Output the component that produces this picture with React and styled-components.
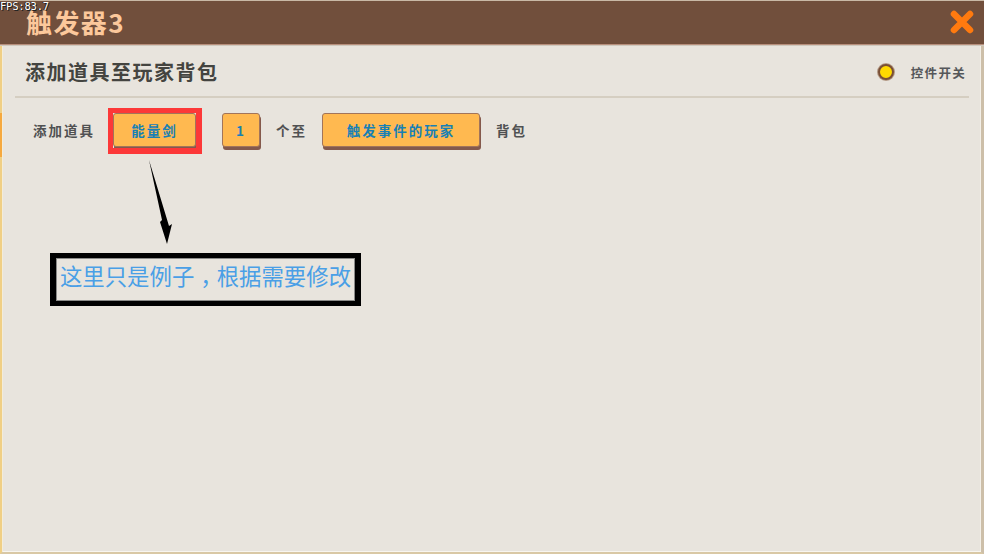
import React from "react";
import styled, { createGlobalStyle } from "styled-components";

const Global = createGlobalStyle`
  html, body { margin: 0; padding: 0; background: #e8e4dd; }
  body { font-family: "Noto Sans CJK SC", "Noto Sans", sans-serif; }
`;
const Screen = styled.div`
  position: relative; width: 984px; height: 554px; overflow: hidden;
  display: flex; flex-direction: column; background: #e8e4dd;
`;
const Header = styled.header`
  height: 45px; flex: none; box-sizing: border-box;
  background: #714f3c; border-top: 1px solid #c9b9a6; border-bottom: 1px solid #b78f7c;
  display: flex; align-items: center; justify-content: space-between;
  padding: 0 9px 0 26px; box-shadow: 0 1px 0 #cfc8bd, 0 2px 0 #d8d2c8;
`;
const HeaderTitle = styled.h1`
  margin: 0; font-size: 26px; line-height: 42px; font-weight: 700; color: #fcc89b;
  letter-spacing: 1.4px; transform: translateY(-1px);
  font-family: "Noto Sans CJK SC", sans-serif;
`;
const Body = styled.main`
  flex: 1; display: flex; flex-direction: column; box-sizing: border-box;
  margin-top: 1px; background: #e8e4dd;
  border-left: 2px solid #f0cf85; border-right: 3px solid #cdbfa9; border-bottom: 2px solid #d9c8a5;
  padding-left: 13px; padding-right: 12px;
  box-shadow: inset 1px 0 0 #f3ecd9, inset 0 -1px 0 #f8f5ef, inset -1px 0 0 #f3efe7;
`;
const EdgeTab = styled.div`
  position: absolute; left: 0; top: 113px; width: 2px; height: 44px; background: #f6a93f;
`;
const TopRow = styled.div`
  height: 52px; flex: none; box-sizing: border-box; display: flex; align-items: center;
  justify-content: space-between; border-bottom: 2px solid #d5cec1; padding: 2px 3px 0 11px;
`;
const PanelTitle = styled.h2`
  margin: 0 0 0 -1px; font-size: 20px; font-weight: 700; color: #444440; letter-spacing: 1.5px; line-height: 28px;
`;
const ToggleWrap = styled.div`
  display: flex; align-items: center; gap: 17px;
`;
const ToggleDot = styled.span`
  width: 12px; height: 12px; border-radius: 50%; background: #ffd900;
  border: 2px solid #7a4f35; box-shadow: 0 0 0 1px #b39a86;
`;
const ToggleLabel = styled.span`
  font-size: 12.5px; font-weight: 700; color: #55575a; letter-spacing: 1.3px; line-height: 18px;
  padding-top: 1px;
`;
const ActionRow = styled.div`
  display: flex; align-items: center; margin-top: 14px; padding-left: 18px; height: 36px;
`;
const Label = styled.span`
  font-size: 13.5px; font-weight: 700; color: #505152; letter-spacing: 2px;
  line-height: 20px; white-space: nowrap; margin-left: ${p => p.$ml || 0}px;
`;
const Chip = styled.div`
  box-sizing: border-box; width: ${p => p.$w}px; height: 34px; margin-left: ${p => p.$ml}px;
  background: #ffb950; border: 1px solid #a2745a; border-radius: 3px;
  box-shadow: 1px 3px 0 #84594c; display: flex; align-items: center; justify-content: center;
  font-size: 13.5px; font-weight: 700; color: #1780b5; letter-spacing: 2px;
`;
const Fps = styled.div`
  position: absolute; left: 0; top: 0; font: 10.5px/12px "DejaVu Sans Mono", monospace;
  color: #fff; text-shadow: 1px 1px 0 #222, -1px 0 0 #222; letter-spacing: -0.2px;
`;
const CloseBtn = styled.svg`
  width: 26px; height: 26px; display: block; margin-top: -1px;
`;
const RedFrame = styled.div`
  position: absolute; left: 108px; top: 108px; width: 94px; height: 46px; box-sizing: border-box;
  border: 5px solid #fc3838; border-right-width: 6px; border-bottom-width: 6px;
`;
const Arrow = styled.svg`
  position: absolute; left: 145px; top: 158px; width: 32px; height: 90px;
`;
const Note = styled.div`
  position: absolute; left: 50px; top: 253px; width: 311px; height: 53px; box-sizing: border-box;
  border: 5px solid #000; border-left-width: 6px; border-right-width: 6px;
  display: flex; align-items: center; justify-content: center;
  font-size: 22.4px; line-height: 30px; color: #4a9fe6; white-space: nowrap;
  padding-bottom: 9px; box-shadow: inset 0 0 0 1px #8a8a88;
`;
const NoteComma = styled.span`
  padding-left: 6px; letter-spacing: -6px;
`;

export default function App() {
  return (
    <Screen>
      <Global />
      <Header>
        <HeaderTitle>触发器3</HeaderTitle>
        <CloseBtn viewBox="0 0 26 26">
          <path d="M5 5 L21 21 M21 5 L5 21" stroke="#ff7a0f" strokeWidth="6.5" strokeLinecap="round" />
        </CloseBtn>
      </Header>
      <Body>
        <TopRow>
          <PanelTitle>添加道具至玩家背包</PanelTitle>
          <ToggleWrap>
            <ToggleDot />
            <ToggleLabel>控件开关</ToggleLabel>
          </ToggleWrap>
        </TopRow>
        <ActionRow>
          <Label>添加道具</Label>
          <Chip $w={83} $ml={18}>能量剑</Chip>
          <Chip $w={38} $ml={26}>1</Chip>
          <Label $ml={16}>个至</Label>
          <Chip $w={158} $ml={15}>触发事件的玩家</Chip>
          <Label $ml={16}>背包</Label>
        </ActionRow>
      </Body>
      <EdgeTab />
      <Fps>FPS:83.7</Fps>
      <RedFrame />
      <Arrow viewBox="0 0 32 90">
        <path d="M4 2 L17 62 L15 64 L22 86 L27 66 L24 68 Z" fill="#000" />
      </Arrow>
      <Note>这里只是例子<NoteComma>，</NoteComma>根据需要修改</Note>
    </Screen>
  );
}
